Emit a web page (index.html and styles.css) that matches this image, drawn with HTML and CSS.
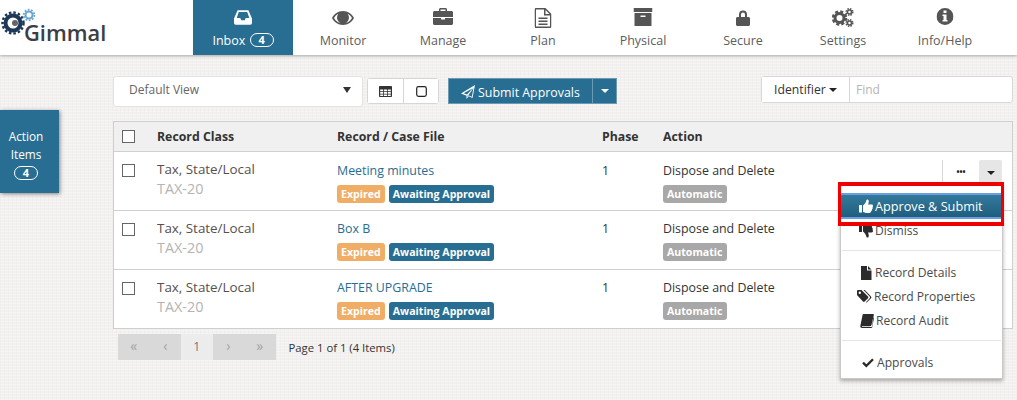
FILE: index.html
```html
<!DOCTYPE html>
<html lang="en">
<head>
<meta charset="utf-8">
<title>Gimmal Inbox</title>
<link rel="stylesheet" href="styles.css">
</head>
<body>
<header class="topbar">
  <a class="logo">
    <svg class="logo-gears" viewBox="0 0 36 30" width="36" height="30">
      <circle cx="13" cy="15" r="7.500" fill="none" stroke="#1c3a57" stroke-width="4"/>
      <circle cx="13" cy="15" r="10.500" fill="none" stroke="#1c3a57" stroke-width="2.500" stroke-dasharray="2.500 2"/>
      <circle cx="15" cy="15" r="3" fill="#666"/>
      <circle cx="29" cy="7" r="3.500" fill="none" stroke="#6ba6cf" stroke-width="2"/>
      <circle cx="29" cy="7" r="5.300" fill="none" stroke="#6ba6cf" stroke-width="1.800" stroke-dasharray="1.800 1.500"/>
    </svg>
    <span class="logo-text">Gimmal</span>
  </a>
  <nav class="mainnav">
    <a class="navitem active">
      <svg class="navicon low" viewBox="0 0 20 16" width="18" height="15"><path fill="currentColor" d="M4 0h12l4 9v5a2 2 0 0 1-2 2H2a2 2 0 0 1-2-2V9zM5.300 2 3 8.500h4l1 2.500h4l1-2.500h4L14.700 2z"/></svg>
      <span class="navlabel">Inbox <span class="pill">4</span></span>
    </a>
    <a class="navitem">
      <svg class="navicon low" viewBox="0 0 22 16" width="22" height="16"><path fill="currentColor" d="M11 1C6 1 2 4 0 8c2 4 6 7 11 7s9-3 11-7c-2-4-6-7-11-7zm0 12.500C7 13.500 3.800 11.400 2 8c1-1.900 2.500-3.400 4.400-4.300A6 6 0 1 0 15.600 3.700C17.500 4.600 19 6.100 20 8c-1.800 3.400-5 5.500-9 5.500z"/></svg>
      <span class="navlabel">Monitor</span>
    </a>
    <a class="navitem">
      <svg class="navicon" viewBox="0 0 20 17" width="20" height="17"><path fill="currentColor" d="M6 3V1.500C6 .7 6.700 0 7.500 0h5c.8 0 1.500.7 1.500 1.500V3h4.500c.8 0 1.500.7 1.500 1.500V9H0V4.500C0 3.700.7 3 1.500 3zm1.500 0h5V1.500h-5zM0 10h8v1.500h4V10h8v5.500c0 .8-.7 1.500-1.500 1.500h-17C.7 17 0 16.300 0 15.500z"/></svg>
      <span class="navlabel">Manage</span>
    </a>
    <a class="navitem">
      <svg class="navicon" viewBox="0 0 17 20" width="17" height="20"><path fill="currentColor" d="M1.500 0H11l6 6v12.500c0 .8-.7 1.500-1.500 1.500h-14C.7 20 0 19.300 0 18.500v-17C0 .7.700 0 1.500 0zm0 1.500v17h14V7.500H9.500v-6zm9.500.6V6h3.900zM4 9.500h9V11H4zm0 3h9V14H4zm0 3h9V17H4z"/></svg>
      <span class="navlabel">Plan</span>
    </a>
    <a class="navitem">
      <svg class="navicon" viewBox="0 0 19 18" width="19" height="18"><path fill="currentColor" d="M0 0h19v4H0zM1 5h17v13H1zm6 2.500V9h5V7.500z"/></svg>
      <span class="navlabel">Physical</span>
    </a>
    <a class="navitem">
      <svg class="navicon low" viewBox="0 0 14 16" width="14" height="16"><path fill="currentColor" d="M3 7V4.500a4 4 0 0 1 8 0V7h1.500c.8 0 1.500.7 1.500 1.500V14.500c0 .8-.7 1.500-1.500 1.500h-11C.7 16 0 15.300 0 14.500V8.500C0 7.700.7 7 1.500 7zm2 0h4V4.500a2 2 0 0 0-4 0z"/></svg>
      <span class="navlabel">Secure</span>
    </a>
    <a class="navitem">
      <svg class="navicon" viewBox="0 0 22 19" width="22" height="19">
        <circle cx="7.500" cy="10" r="4.500" fill="none" stroke="currentColor" stroke-width="3"/>
        <circle cx="7.500" cy="10" r="6.500" fill="none" stroke="currentColor" stroke-width="2.500" stroke-dasharray="3 2.100"/>
        <circle cx="17.500" cy="4" r="2" fill="none" stroke="currentColor" stroke-width="1.500"/>
        <circle cx="17.500" cy="4" r="3.300" fill="none" stroke="currentColor" stroke-width="1.500" stroke-dasharray="1.500 1.100"/>
        <circle cx="17.500" cy="15" r="2" fill="none" stroke="currentColor" stroke-width="1.500"/>
        <circle cx="17.500" cy="15" r="3.300" fill="none" stroke="currentColor" stroke-width="1.500" stroke-dasharray="1.500 1.100"/>
      </svg>
      <span class="navlabel">Settings</span>
    </a>
    <a class="navitem last">
      <svg class="navicon" viewBox="0 0 17 17" width="17" height="17"><path fill="currentColor" fill-rule="evenodd" d="M8.500 0a8.500 8.500 0 1 1 0 17 8.500 8.500 0 0 1 0-17zM7 2.500v2.500h3V2.500zM6 6.500V8h1v4H6v1.500h5V12h-1V6.500z"/></svg>
      <span class="navlabel">Info/Help</span>
    </a>
  </nav>
</header>

<aside class="action-tab">
  <span>Action</span>
  <span>Items</span>
  <span class="pill small">4</span>
</aside>

<main class="content">
  <div class="toolbar">
    <div class="viewselect"><span>Default View</span><i class="caret dark"></i></div>
    <div class="btngroup">
      <button class="toggle" type="button">
        <svg viewBox="0 0 13 11" width="13" height="11"><path fill="#333" fill-rule="evenodd" d="M1 0h11c.6 0 1 .4 1 1v9c0 .6-.4 1-1 1H1c-.6 0-1-.4-1-1V1c0-.6.4-1 1-1zm.2 3.500v1.700h3V3.500zm3.800 0v1.700h3V3.500zm3.800 0v1.700h3V3.500zM1.200 6v1.700h3V6zM5 6v1.700h3V6zm3.800 0v1.700h3V6zM1.200 8.400V10h3V8.400zm3.800 0V10h3V8.400zm3.800 0V10h3V8.400z"/></svg>
      </button>
      <button class="toggle" type="button">
        <svg viewBox="0 0 11 11" width="11" height="11"><rect x=".7" y=".7" width="9.600" height="9.600" rx="1.800" fill="none" stroke="#222" stroke-width="1.200"/></svg>
      </button>
    </div>
    <div class="submit">
      <button class="submit-main" type="button">
        <svg viewBox="0 0 14 14" width="14" height="14"><path fill="#fff" fill-rule="evenodd" d="M14 0 11.500 13 7.700 11.300 5.500 14V10.700L0 8.400zM2.700 8.200 6 9.600 11.800 3.200zM6.500 10.300V12l1-1.300zM7.300 10.200l3.500 1.500 1.700-8.700z"/></svg>
        Submit Approvals
      </button>
      <button class="submit-caret" type="button"><i class="caret white"></i></button>
    </div>
    <div class="search">
      <button class="identifier" type="button">Identifier <i class="caret tiny"></i></button>
      <span class="find">Find</span>
    </div>
  </div>

  <section class="grid">
    <div class="gridrow head">
      <span class="cell-check"><i class="check"></i></span>
      <span>Record Class</span>
      <span>Record / Case File</span>
      <span>Phase</span>
      <span>Action</span>
    </div>

    <div class="gridrow">
      <span class="cell-check"><i class="check"></i></span>
      <div class="stack"><span class="cls">Tax, State/Local</span><span class="code">TAX-20</span></div>
      <div class="stack"><a class="link">Meeting minutes</a><div class="tags"><b class="tag orange">Expired</b><b class="tag blue">Awaiting Approval</b></div></div>
      <span class="phase">1</span>
      <div class="stack"><span class="act">Dispose and Delete</span><div class="tags"><b class="tag grey">Automatic</b></div></div>
      <div class="rowbtns"><span class="more">•••</span><span class="open"><i class="caret dark small"></i></span></div>
    </div>

    <div class="gridrow">
      <span class="cell-check"><i class="check"></i></span>
      <div class="stack"><span class="cls">Tax, State/Local</span><span class="code">TAX-20</span></div>
      <div class="stack"><a class="link">Box B</a><div class="tags"><b class="tag orange">Expired</b><b class="tag blue">Awaiting Approval</b></div></div>
      <span class="phase">1</span>
      <div class="stack"><span class="act">Dispose and Delete</span><div class="tags"><b class="tag grey">Automatic</b></div></div>
      <div class="rowbtns"><span class="open"></span></div>
    </div>

    <div class="gridrow">
      <span class="cell-check"><i class="check"></i></span>
      <div class="stack"><span class="cls">Tax, State/Local</span><span class="code">TAX-20</span></div>
      <div class="stack"><a class="link">AFTER UPGRADE</a><div class="tags"><b class="tag orange">Expired</b><b class="tag blue">Awaiting Approval</b></div></div>
      <span class="phase">1</span>
      <div class="stack"><span class="act">Dispose and Delete</span><div class="tags"><b class="tag grey">Automatic</b></div></div>
      <div class="rowbtns"><span class="open"></span></div>
    </div>
  </section>

  <div class="pager">
    <div class="pages">
      <span>«</span><span>‹</span><span class="current">1</span><span>›</span><span>»</span>
    </div>
    <span class="pageinfo">Page 1 of 1 (4 Items)</span>
  </div>
</main>

<div class="menu">
  <a class="menuitem selected">
    <svg viewBox="0 0 14 14" width="14" height="14"><path fill="#fff" d="M0 6h3v7.500H0zM4 6.500c1.500-1 3-3 3.500-5.500.2-1 2.300-.9 2.300 1.300 0 1.200-.5 2.300-.8 3.200h3.600c1.600 0 1.800 2 .9 2.600.5.900.2 2-.5 2.300.2 1-.3 1.800-1 2 .1 1-.5 1.600-1.500 1.600H8c-1.500 0-2.800-.7-4-1z"/></svg>
    Approve &amp; Submit
  </a>
  <a class="menuitem">
    <svg viewBox="0 0 14 14" width="14" height="14"><path fill="#2b2b2b" d="M0 .5h3V8H0zM4 7.500c1.500 1 3 3 3.500 5.500.2 1 2.300.9 2.300-1.300 0-1.200-.5-2.300-.8-3.200h3.600c1.600 0 1.800-2 .9-2.600.5-.9.2-2-.5-2.300.2-1-.3-1.800-1-2 .1-1-.5-1.600-1.500-1.600H8C6.500 0 5.200.7 4 1.700z"/></svg>
    Dismiss
  </a>
  <hr>
  <a class="menuitem">
    <svg viewBox="0 0 14 14" width="14" height="14"><path fill="#2b2b2b" d="M2 0h6v4.500h4.500V14H2zM9 0l3.500 3.500H9z"/></svg>
    Record Details
  </a>
  <a class="menuitem">
    <svg class="ico-tags" viewBox="0 0 15 14" width="15" height="14"><path fill="#2b2b2b" fill-rule="evenodd" d="M0 2.500V1.200C0 .5.500 0 1.200 0h3.300L11 6.500c.5.500.5 1.200 0 1.700L7.700 11.500c-.5.500-1.200.5-1.700 0L.4 5.500C.1 5.200 0 4.900 0 4.500zM2.800 1.600a1.200 1.200 0 1 0 0 2.400 1.200 1.200 0 0 0 0-2.400zM6.500 0h1.300L14 6.500c.5.500.5 1.200 0 1.700l-4 4c-.4.400-.9.500-1.300.2l4-4.200c.5-.5.500-1.200 0-1.700z"/></svg>
    Record Properties
  </a>
  <a class="menuitem">
    <svg class="ico-book" viewBox="0 0 14 14" width="14" height="14"><path fill="#2b2b2b" d="M3.500 0H13c.7 0 1 .5.800 1.200L11.500 11c-.2.800-.7 1.200-1.500 1.200H2.300c-.6 0-.9.800 0 .8H12l1.300-9.500.7.500-1.800 9.500c-.1.300-.3.500-.7.500H2C.6 14 0 13 .4 11.600L2.600.8C2.700.3 3 0 3.500 0z"/></svg>
    Record Audit
  </a>
  <hr>
  <a class="menuitem">
    <svg class="ico-check" viewBox="0 0 14 12" width="12" height="10"><path fill="#2b2b2b" d="M0 6.500 2 4.500 5 7.500 12 .5 14 2.500 5 11.500z"/></svg>
    Approvals
  </a>
</div>
<div class="callout"></div>
</body>
</html>
```
FILE: styles.css
```css
* { box-sizing: border-box; }
html, body { height: 100%; }
body {
  margin: 0;
  height: 400px;
  overflow: hidden;
  position: relative;
  font-family: "Open Sans", "Liberation Sans", sans-serif;
  font-size: 12.400px;
  color: #333;
  background-color: #f3f1f0;
  background-image:
    repeating-linear-gradient(0deg, rgba(255,255,255,.28) 0 1px, transparent 1px 3px),
    repeating-linear-gradient(90deg, rgba(225,222,220,.22) 0 1px, transparent 1px 4px);
}
button { font-family: inherit; }

.topbar {
  height: 55px;
  background: #fff;
  box-shadow: 0 1px 3px rgba(0,0,0,.3);
  display: flex;
  position: relative;
}
.logo { width: 193px; position: relative; display: block; }
.logo-gears { position: absolute; left: 0; top: 8px; }
.logo-text {
  position: absolute;
  left: 24px;
  top: 17px;
  font-size: 21.800px;
  line-height: 32px;
  font-weight: 600;
  color: #3b3e44;
}
.mainnav { display: flex; }
.navitem {
  width: 100px;
  height: 55px;
  display: flex;
  flex-direction: column;
  align-items: center;
  color: #555;
  position: relative;
}
.navitem.last { margin-left: 2px; }
.navicon { position: absolute; top: 8px; left: 50%; transform: translateX(-50%); }
.navicon.low { top: 10px; }
.navlabel { position: absolute; top: 32px; left: 0; right: 0; text-align: center; font-size: 12.500px; line-height: 18px; color: #5d5d5d; white-space: nowrap; }
.navitem.active { background: #286e92; color: #fff; }
.navitem.active .navlabel { color: #fff; }
.pill {
  display: inline-block;
  width: 24px;
  height: 14px;
  margin-left: 1px;
  border: 1px solid #fff;
  border-radius: 8px;
  font-size: 11px;
  font-weight: 700;
  line-height: 12px;
  text-align: center;
  vertical-align: 1px;
  color: #fff;
}
.pill.small { margin: 3px 0 0; }

.action-tab {
  position: absolute;
  left: 0;
  top: 110px;
  width: 59px;
  height: 83px;
  padding: 17px 7px 0 0;
  background: #286e92;
  box-shadow: 1px 1px 4px rgba(0,0,0,.45);
  display: flex;
  flex-direction: column;
  align-items: center;
  color: #fff;
  font-size: 11.800px;
  line-height: 18px;
}

.content { padding: 21px 4px 0 113px; }
.toolbar { height: 45px; display: flex; align-items: flex-start; }
.viewselect {
  width: 250px;
  height: 31px;
  padding: 0 11px 4px 15px;
  background: #fff;
  border: 1px solid #e3e3e3;
  border-radius: 3px;
  display: flex;
  align-items: center;
  justify-content: space-between;
  font-size: 12px;
  color: #666;
}
.caret { display: inline-block; width: 0; height: 0; border-style: solid; border-color: transparent; }
.caret.dark { border-width: 6px 4.500px 0; border-top-color: #333; }
.caret.dark.small { border-width: 4px 4px 0; border-top-color: #222; }
.caret.white { border-width: 4px 4px 0; border-top-color: #fff; }
.caret.tiny { border-width: 4px 4px 0; border-top-color: #222; vertical-align: 2px; }
.btngroup {
  margin: 2px 0 0 4px;
  display: flex;
  height: 26px;
  background: #fff;
  border: 1px solid #d6d6d6;
  border-radius: 3px;
}
.toggle {
  width: 35px;
  height: 24px;
  padding: 0;
  background: #fff;
  border: 0;
  display: flex;
  align-items: center;
  justify-content: center;
}
.toggle + .toggle { border-left: 1px solid #d6d6d6; }
.submit { margin: 2px 0 0 9px; display: flex; height: 26px; }
.submit-main {
  width: 144px;
  padding: 2px 0 0;
  background: #286e92;
  border: 1px solid #6d9ab3;
  border-right: 0;
  color: #fff;
  font-size: 12.400px;
  display: flex;
  align-items: center;
  justify-content: center;
  gap: 3px;
}
.submit-caret {
  width: 25px;
  padding: 0;
  background: #286e92;
  border: 1px solid #6d9ab3;
  display: flex;
  align-items: center;
  justify-content: center;
}
.search {
  margin-left: auto;
  width: 252px;
  height: 27px;
  display: flex;
  background: #fff;
  border: 1px solid #d8d8d8;
  border-radius: 3px;
}
.identifier {
  width: 88px;
  padding: 0;
  background: #fff;
  border: 0;
  border-right: 1px solid #d8d8d8;
  font-size: 12.200px;
  color: #333;
}
.find { padding: 4px 6px; font-size: 12px; line-height: 17px; color: #b5b5b5; }

.grid { background: #fff; border: 1px solid #cfcfcf; height: 208px; }
.gridrow {
  display: grid;
  grid-template-columns: 43px 180px 265px 61px 1fr;
  height: 59px;
  border-bottom: 1px solid #d0d0d0;
  position: relative;
}
.gridrow:last-child { border-bottom: 0; height: 58px; }
.gridrow.head {
  height: 30px;
  background: #f0f0f0;
  font-weight: 700;
  font-size: 12.300px;
  line-height: 29px;
  color: #333;
}
.cell-check { padding: 8px 0 0 8px; line-height: 0; display: block; }
.gridrow:not(.head) .cell-check { padding-top: 12px; }
.check { display: block; width: 13px; height: 13px; background: #fff; border: 1px solid #666; }
.stack { display: flex; flex-direction: column; padding-top: 9px; }
.head + .gridrow .stack:not(:nth-child(2)), .head + .gridrow .phase { padding-top: 10px; }
.cls { font-size: 13.400px; line-height: 17px; color: #55504f; }
.code { margin-top: 2px; font-size: 14.400px; line-height: 18px; color: #b4b4b4; }
.link { font-size: 12.400px; line-height: 18px; color: #286e92; }
.act { font-size: 12.400px; line-height: 18px; color: #333; }
.phase { padding-top: 9px; line-height: 18px; color: #333; }
.tags { margin-top: 5px; display: flex; gap: 4px; }
.tag {
  height: 18px;
  padding: 0 4px;
  border-radius: 3px;
  font-size: 10.600px;
  font-weight: 700;
  line-height: 18px;
  color: #fff;
  white-space: nowrap;
}
.tag.orange { background: #f0ad66; }
.tag.blue { background: #286e92; }
.tag.grey { background: #a8a8a8; }
.rowbtns {
  position: absolute;
  right: 10px;
  top: 8px;
  height: 26px;
  display: flex;
}
.more {
  width: 37px;
  border-left: 1px solid #d8d8d8;
  font-size: 8px;
  font-weight: 700;
  line-height: 24px;
  text-align: center;
  color: #222;
}
.open {
  width: 23px;
  background: #e6e6e6;
  border-radius: 2px;
  display: flex;
  align-items: center;
  justify-content: center;
}

.pager { margin: 5px 0 0 5px; display: flex; align-items: center; height: 26px; }
.pages { display: flex; background: #d9d9d9; height: 26px; color: #a3a3a3; }
.pages span { width: 31.500px; text-align: center; line-height: 24px; font-size: 14px; }
.pages .current { background: #ececec; color: #777; font-size: 12px; line-height: 26px; }
.pageinfo { margin-left: 13px; font-size: 11.300px; color: #333; }

.menu {
  position: absolute;
  left: 840px;
  top: 183px;
  width: 163px;
  height: 196px;
  padding-top: 11px;
  background: #fff;
  border: 1px solid #c9c9c9;
  box-shadow: 0 2px 4px rgba(0,0,0,.3);
  font-size: 12.100px;
  color: #4a4a4a;
}
.menuitem {
  display: flex;
  align-items: center;
  gap: 2px;
  height: 24px;
  padding-left: 18px;
  line-height: 24px;
}
.menu hr { margin: 7px 1px 10px; border: 0; border-top: 1px solid #e5e5e5; }
.menu hr:last-of-type { margin: 7px 1px 10px; }
.ico-tags { margin-left: -2px; }
.ico-book { margin-left: 1px; }
.ico-check { margin: 0 1px 0 3px; }
.menuitem.selected {
  margin: -2px 0 0;
  height: 26px;
  color: #fff;
  font-size: 12.700px;
  background: linear-gradient(#33799c, #286b8c 55%, #1f5d7c);
  border-top: 2px solid #6d9fe0;
  border-bottom: 2px solid #6d9fe0;
}
.callout {
  position: absolute;
  left: 838px;
  top: 182px;
  width: 166px;
  height: 44px;
  border-style: solid;
  border-color: #ee0000;
  border-width: 4px 3px;
}
```
